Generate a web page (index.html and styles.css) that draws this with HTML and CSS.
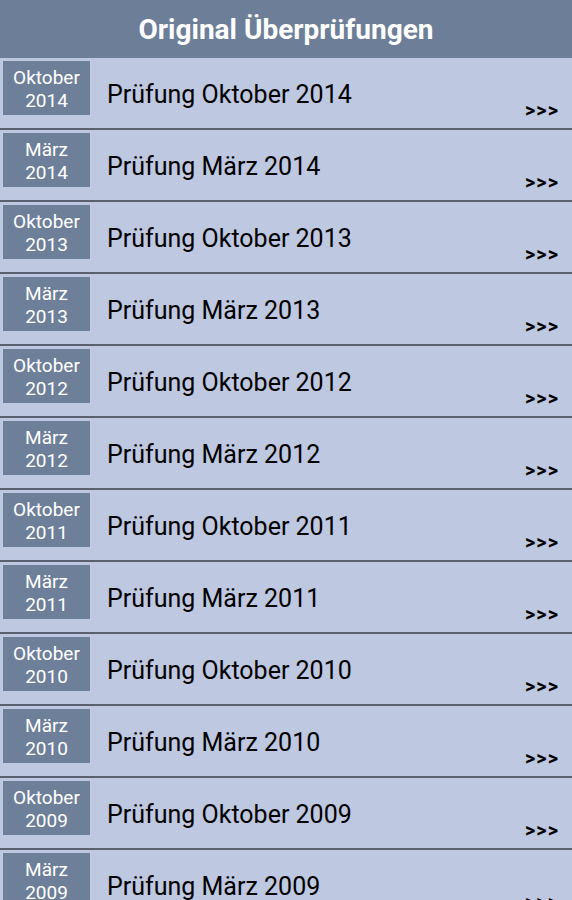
FILE: index.html
```html
<!DOCTYPE html>
<html lang="de">
<head>
  <meta charset="UTF-8" />
  <meta name="viewport" content="width=device-width, initial-scale=1" />
  <title>Original Überprüfungen</title>
  <link rel="stylesheet" href="styles.css">
</head>
<body>
  <header class="titel">Original Überprüfungen</header>

  <ul class="liste">
    <li class="eintrag"><div class="datum">Oktober<br/>2014</div><span class="name">Prüfung Oktober 2014</span><span class="pfeil">&gt;&gt;&gt;</span></li>
    <li class="eintrag"><div class="datum">März<br/>2014</div><span class="name">Prüfung März 2014</span><span class="pfeil">&gt;&gt;&gt;</span></li>
    <li class="eintrag"><div class="datum">Oktober<br/>2013</div><span class="name">Prüfung Oktober 2013</span><span class="pfeil">&gt;&gt;&gt;</span></li>
    <li class="eintrag"><div class="datum">März<br/>2013</div><span class="name">Prüfung März 2013</span><span class="pfeil">&gt;&gt;&gt;</span></li>
    <li class="eintrag"><div class="datum">Oktober<br/>2012</div><span class="name">Prüfung Oktober 2012</span><span class="pfeil">&gt;&gt;&gt;</span></li>
    <li class="eintrag"><div class="datum">März<br/>2012</div><span class="name">Prüfung März 2012</span><span class="pfeil">&gt;&gt;&gt;</span></li>
    <li class="eintrag"><div class="datum">Oktober<br/>2011</div><span class="name">Prüfung Oktober 2011</span><span class="pfeil">&gt;&gt;&gt;</span></li>
    <li class="eintrag"><div class="datum">März<br/>2011</div><span class="name">Prüfung März 2011</span><span class="pfeil">&gt;&gt;&gt;</span></li>
    <li class="eintrag"><div class="datum">Oktober<br/>2010</div><span class="name">Prüfung Oktober 2010</span><span class="pfeil">&gt;&gt;&gt;</span></li>
    <li class="eintrag"><div class="datum">März<br/>2010</div><span class="name">Prüfung März 2010</span><span class="pfeil">&gt;&gt;&gt;</span></li>
    <li class="eintrag"><div class="datum">Oktober<br/>2009</div><span class="name">Prüfung Oktober 2009</span><span class="pfeil">&gt;&gt;&gt;</span></li>
    <li class="eintrag"><div class="datum">März<br/>2009</div><span class="name">Prüfung März 2009</span><span class="pfeil">&gt;&gt;&gt;</span></li>
  </ul>
</body>
</html>
```

FILE: styles.css
```css
* {
  box-sizing: border-box;
}

body {
  margin: 0;
  font-family: Roboto, "Noto Sans", sans-serif;
  background: #bec8e0;
  color: #000;
  height: 900px;
  overflow: hidden;
}

.titel {
  height: 58px;
  background: #6d7e98;
  color: #fff;
  font-size: 28px;
  font-weight: 700;
  text-align: center;
  line-height: 60px;
}

.liste {
  list-style: none;
  margin: 0;
  padding: 0;
}

.eintrag {
  display: flex;
  align-items: center;
  height: 72px;
  padding: 0 13px 0 3px;
  border-bottom: 2px solid #596170;
  background: #bec8e0;
}

.datum {
  width: 87px;
  height: 54px;
  margin-top: -10px;
  background: #6e7f99;
  color: #fff;
  font-size: 19px;
  line-height: 23px;
  text-align: center;
  padding-top: 5px;
}

.name {
  flex: 1;
  margin-left: 17px;
  font-size: 25px;
  margin-top: 2px;
}

.pfeil {
  align-self: flex-end;
  margin-bottom: 6px;
  font-size: 20px;
  font-weight: 700;
  letter-spacing: 1px;
}
```
